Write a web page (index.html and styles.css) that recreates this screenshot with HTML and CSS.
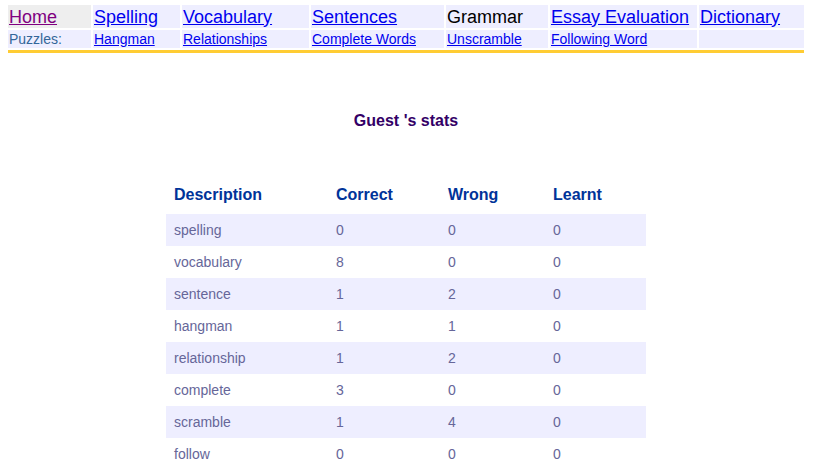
FILE: index.html
```html
<!DOCTYPE html>
<html>
<head>
<meta charset="utf-8">
<link rel="stylesheet" href="styles.css">
</head>
<body>
<div class="page">
  <nav class="nav">
    <div class="cell big home"><a class="visited" href="#">Home</a></div>
    <div class="cell big"><a href="#">Spelling</a></div>
    <div class="cell big"><a href="#">Vocabulary</a></div>
    <div class="cell big"><a href="#">Sentences</a></div>
    <div class="cell big plain">Grammar</div>
    <div class="cell big"><a href="#">Essay Evaluation</a></div>
    <div class="cell big"><a href="#">Dictionary</a></div>
    <div class="cell small label">Puzzles:</div>
    <div class="cell small"><a href="#">Hangman</a></div>
    <div class="cell small"><a href="#">Relationships</a></div>
    <div class="cell small"><a href="#">Complete Words</a></div>
    <div class="cell small"><a href="#">Unscramble</a></div>
    <div class="cell small"><a href="#">Following Word</a></div>
    <div class="cell small"></div>
  </nav>
  <div class="bar"></div>

  <h1 class="title">Guest 's stats</h1>

  <table class="stats">
    <colgroup>
      <col class="c1"><col class="c2"><col class="c3"><col class="c4">
    </colgroup>
    <thead>
      <tr><th>Description</th><th>Correct</th><th>Wrong</th><th>Learnt</th></tr>
    </thead>
    <tbody>
      <tr class="alt"><td>spelling</td><td>0</td><td>0</td><td>0</td></tr>
      <tr><td>vocabulary</td><td>8</td><td>0</td><td>0</td></tr>
      <tr class="alt"><td>sentence</td><td>1</td><td>2</td><td>0</td></tr>
      <tr><td>hangman</td><td>1</td><td>1</td><td>0</td></tr>
      <tr class="alt"><td>relationship</td><td>1</td><td>2</td><td>0</td></tr>
      <tr><td>complete</td><td>3</td><td>0</td><td>0</td></tr>
      <tr class="alt"><td>scramble</td><td>1</td><td>4</td><td>0</td></tr>
      <tr><td>follow</td><td>0</td><td>0</td><td>0</td></tr>
    </tbody>
  </table>
</div>
</body>
</html>
```

FILE: styles.css
```css
html, body {
  background: #ffffff;
}
body {
  margin: 5px 8px 0;
  font-family: Arial, "Liberation Sans", sans-serif;
}
.page {
  width: 796px;
}
.nav {
  display: grid;
  grid-template-columns: 83px 87px 127px 133px 102px 147px 105px;
  grid-template-rows: 23px 18px;
  gap: 2px;
}
.cell {
  background: #eeeeff;
  padding: 0 1px;
  display: flex;
  align-items: center;
  white-space: nowrap;
}
.cell.home {
  background: #eeeeee;
}
.big {
  font-size: 18px;
  padding-top: 1px;
}
.small {
  font-size: 14px;
}
.nav a {
  color: #0000ee;
  text-decoration: underline;
}
.nav a.visited {
  color: #800080;
}
.plain {
  color: #000000;
}
.label {
  color: #336699;
}
.bar {
  margin-top: 2px;
  height: 3px;
  background: #ffcc33;
}
.title {
  margin: 59px 0 0;
  text-align: center;
  font-size: 16px;
  font-weight: bold;
  color: #330066;
  line-height: 18px;
}
.stats {
  margin: 52px auto 0;
  width: 480px;
  border-collapse: collapse;
  table-layout: fixed;
}
.c1 { width: 162px; }
.c2 { width: 112px; }
.c3 { width: 105px; }
.c4 { width: 101px; }
.stats th {
  text-align: left;
  font-size: 16px;
  font-weight: bold;
  color: #003399;
  line-height: 18px;
  padding: 4px 8px 10px;
}
.stats td {
  font-size: 14px;
  color: #666699;
  line-height: 16px;
  padding: 8px 8px;
}
.stats tr.alt td {
  background: #eeeeff;
}
```
